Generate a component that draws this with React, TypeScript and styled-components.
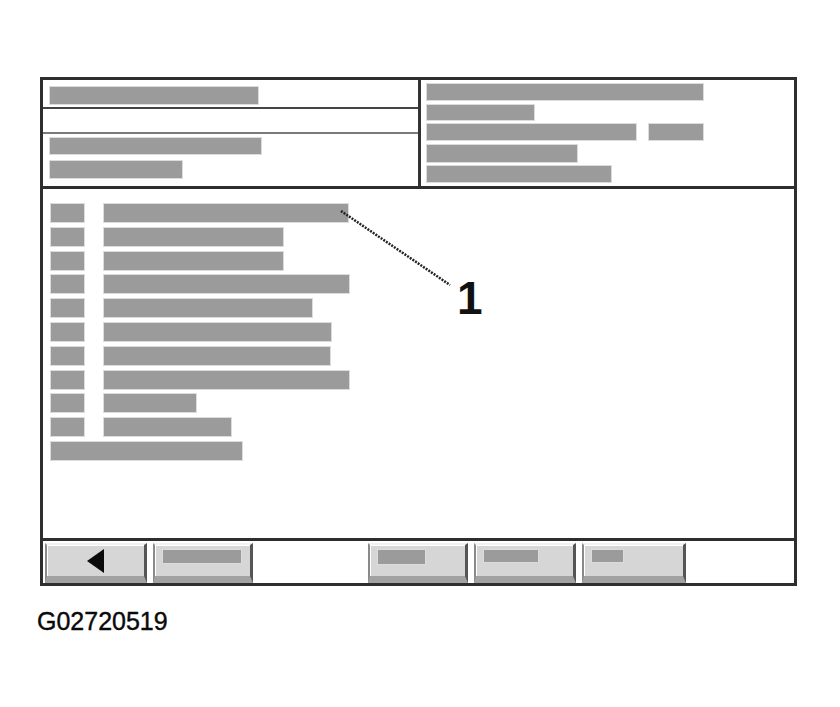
import styled, { createGlobalStyle } from "styled-components";

const GlobalStyle = createGlobalStyle`
  html, body {
    margin: 0;
    padding: 0;
    background: #ffffff;
  }
  body {
    font-family: "Liberation Sans", Arial, sans-serif;
  }
`;

const Page = styled.div`
  position: relative;
  width: 840px;
  height: 707px;
  padding: 77px 0 0 40px;
  box-sizing: border-box;
`;

const Frame = styled.div`
  width: 757px;
  height: 509px;
  box-sizing: border-box;
  border: 3px solid #2e2e2e;
  display: flex;
  flex-direction: column;
`;

const Header = styled.div`
  display: grid;
  grid-template-columns: 378px 1fr;
  height: 109px;
  box-sizing: border-box;
  border-bottom: 3px solid #2e2e2e;
`;

const LeftPanel = styled.div`
  display: flex;
  flex-direction: column;
  border-right: 3px solid #333;
`;

const TitleRow = styled.div`
  height: 29px;
  padding: 7px 0 0 7px;
  box-sizing: border-box;
  border-bottom: 2px solid #444;
`;

const EmptyRow = styled.div`
  height: 23px;
  border-bottom: 2px solid #7a7a7a;
`;

const InfoRows = styled.div`
  display: flex;
  flex-direction: column;
  gap: 7px;
  padding: 4px 0 0 7px;
`;

const RightPanel = styled.div`
  display: flex;
  flex-direction: column;
  gap: 4.5px;
  padding: 4px 0 0 6px;
`;

const Line = styled.div`
  display: flex;
  gap: 13px;
`;

const Bar = styled.div<{ $w: number; $h?: number }>`
  width: ${(p) => p.$w}px;
  height: ${(p) => p.$h ?? 16}px;
  background: #9b9b9b;
  box-shadow: 0 0 0 1px #dcdcdc;
  flex-shrink: 0;
`;

const Main = styled.div`
  flex: 1;
  display: flex;
  flex-direction: column;
  gap: 5.8px;
  padding: 15px 0 0 8px;
  border-bottom: 3px solid #2e2e2e;
`;

const ListRow = styled.div`
  display: flex;
  gap: 20px;
`;

const Toolbar = styled.div`
  display: flex;
  align-items: stretch;
  gap: 6px;
  height: 42px;
  padding: 2px 0 0 2px;
  box-sizing: border-box;
`;

const ToolButton = styled.div<{ $w: number; $push?: number }>`
  width: ${(p) => p.$w}px;
  margin-left: ${(p) => p.$push ?? 0}px;
  box-sizing: border-box;
  background: #d6d6d6;
  border-top: 2px solid #f2f2f2;
  border-left: 2px solid #8a8a8a;
  border-right: 3px solid #555;
  border-bottom: 7px solid #a2a2a2;
  box-shadow: inset 1px 1px 0 #ffffff;
  padding: 5px 0 0 8px;
  display: flex;
  align-items: flex-start;
`;

const BackButton = styled(ToolButton)`
  justify-content: center;
  align-items: center;
  padding: 0 0 0 0;
`;

const Callout = styled.svg`
  position: absolute;
  left: 0;
  top: 0;
  pointer-events: none;
`;

const CalloutNumber = styled.span`
  position: absolute;
  left: 457px;
  top: 275px;
  font-family: "Liberation Sans", Arial, sans-serif;
  font-weight: 700;
  font-size: 46px;
  line-height: 46px;
  color: #111;
`;

const FigureId = styled.div`
  margin-top: 23px;
  margin-left: -3px;
  font-family: "Liberation Sans", Arial, sans-serif;
  font-weight: 400;
  font-size: 25px;
  line-height: 25px;
  color: #0a0a0a;
  -webkit-text-stroke: 0.4px #0a0a0a;
`;

const listRows = [244, 179, 179, 245, 208, 227, 226, 245, 92, 127];

export default function App() {
  return (
    <>
      <GlobalStyle />
      <Page>
        <Frame>
          <Header>
            <LeftPanel>
              <TitleRow>
                <Bar $w={208} $h={17} />
              </TitleRow>
              <EmptyRow />
              <InfoRows>
                <Bar $w={211} $h={16} />
                <Bar $w={132} $h={17} />
              </InfoRows>
            </LeftPanel>
            <RightPanel>
              <Bar $w={276} />
              <Bar $w={107} $h={15} />
              <Line>
                <Bar $w={209} />
                <Bar $w={54} />
              </Line>
              <Bar $w={150} $h={17} />
              <Bar $w={184} />
            </RightPanel>
          </Header>
          <Main>
            {listRows.map((w, i) => (
              <ListRow key={i}>
                <Bar $w={33} $h={18} />
                <Bar $w={w} $h={18} />
              </ListRow>
            ))}
            <Bar $w={191} $h={18} />
          </Main>
          <Toolbar>
            <BackButton $w={102}>
              <svg width="17" height="26" viewBox="0 0 17 26">
                <polygon points="0,13 17,1 17,25" fill="#0a0a0a" />
              </svg>
            </BackButton>
            <ToolButton $w={100}>
              <Bar $w={78} $h={13} />
            </ToolButton>
            <ToolButton $w={100} $push={109}>
              <Bar $w={47} $h={14} />
            </ToolButton>
            <ToolButton $w={102}>
              <Bar $w={54} $h={12} />
            </ToolButton>
            <ToolButton $w={104}>
              <Bar $w={31} $h={12} />
            </ToolButton>
          </Toolbar>
        </Frame>
        <FigureId>G02720519</FigureId>
        <Callout width="840" height="707">
          <line
            x1="341"
            y1="211"
            x2="450"
            y2="285"
            stroke="#222"
            strokeWidth="2.5"
            strokeDasharray="2 1.2"
          />
        </Callout>
        <CalloutNumber>1</CalloutNumber>
      </Page>
    </>
  );
}
